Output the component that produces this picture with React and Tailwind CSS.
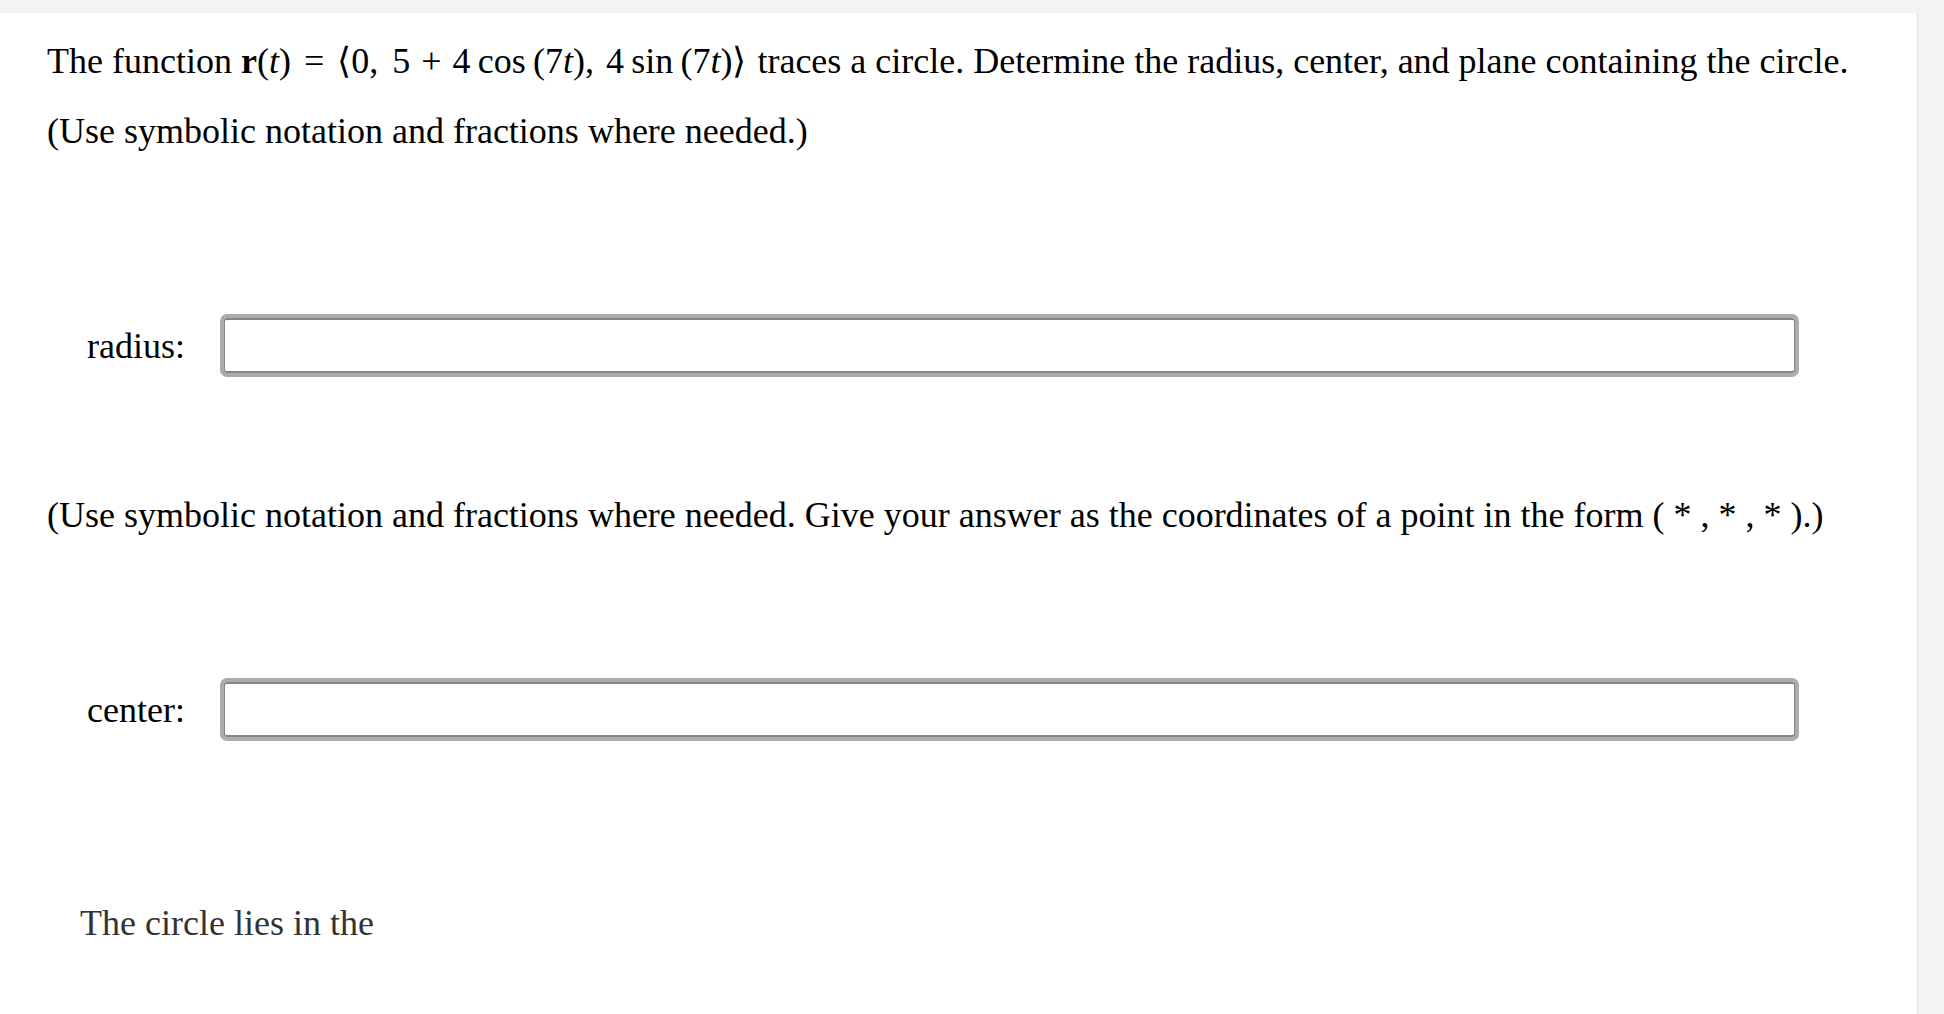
import React from 'react';

const serif = { fontFamily: '"Liberation Serif", "Times New Roman", serif' };

const Sp = ({ w }) => <span className={`inline-block ${w}`} />;

function AnswerRow({ label }) {
    return (
        <div className="flex items-center pl-[40px]">
            <span className="w-[133px] shrink-0 text-black">{label}</span>
            <input
                type="text"
                className="w-[1579px] h-[63px] bg-white border-[4px] border-[#acacac] rounded-[7px] shadow-[inset_0_2px_0_#858585,inset_0_-2px_0_#858585,inset_1px_0_0_#858585,inset_-1px_0_0_#858585] outline-none px-2 text-[36px]"
            />
        </div>
    );
}

export default function App() {
    return (
        <div className="min-h-screen bg-[#f3f3f3] pt-[13px] pr-[26px]" style={serif}>
            <div className="bg-white h-[1001px] border-r border-[#e2e2e2] pl-[47px] pt-[27px] text-[36px] leading-[42px] text-black">
                <p>
                    The function <b>r</b>(<i>t</i>)<Sp w="w-[13px]" />=<Sp w="w-[13px]" />⟨0,<Sp w="w-[14px]" />5<Sp w="w-[11px]" />+<Sp w="w-[11px]" />4&thinsp;cos&thinsp;(7<i>t</i>),<Sp w="w-[12px]" />4&thinsp;sin&thinsp;(7<i>t</i>)⟩<Sp w="w-[11px]" />traces a circle. Determine the radius, center, and plane containing the circle.
                </p>
                <p className="mt-[28px]">(Use symbolic notation and fractions where needed.)</p>

                <div className="mt-[162px]">
                    <AnswerRow label="radius:" />
                </div>

                <p className="mt-[117px]">
                    (Use symbolic notation and fractions where needed. Give your answer as the coordinates of a point in the form ( * , * , * ).)
                </p>

                <div className="mt-[142px]">
                    <AnswerRow label="center:" />
                </div>

                <p className="mt-[161px] pl-[33px] text-[#333]">The circle lies in the</p>
            </div>
        </div>
    );
}
